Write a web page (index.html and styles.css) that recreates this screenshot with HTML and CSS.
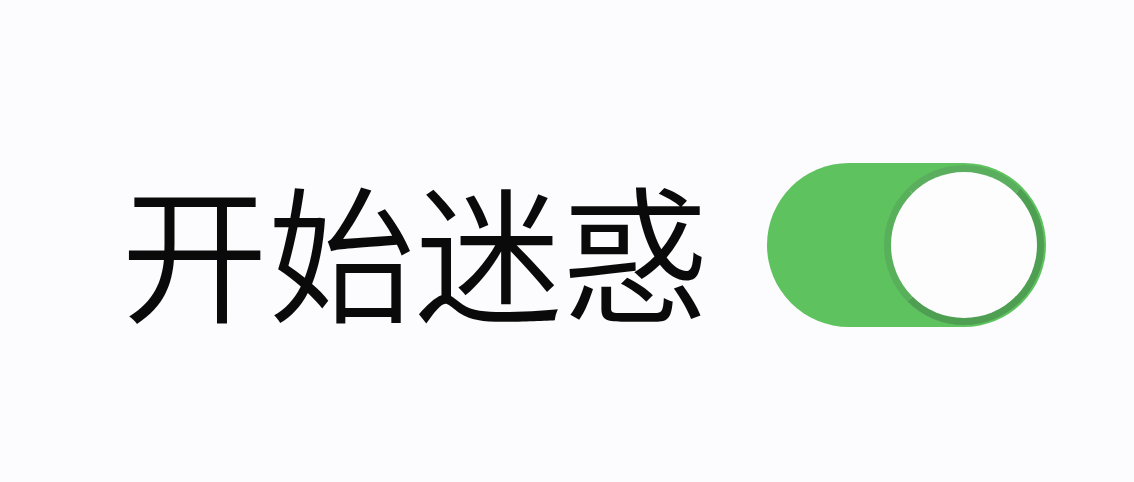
FILE: index.html
```html
<!DOCTYPE html>
<html lang="zh-CN">

<head>
    <meta charset="UTF-8">
    <meta name="viewport" content="width=device-width, initial-scale=1.0">
    <title>开始迷惑</title>
    <link rel="stylesheet" href="styles.css">
</head>

<body>
    <div class="setting-row">
        <span class="setting-label">开始迷惑</span>
        <label class="switch">
            <input type="checkbox" checked>
            <span class="track"><span class="knob"></span></span>
        </label>
    </div>
</body>

</html>
```

FILE: styles.css
```css
body {
    margin: 0;
    padding: 0;
    height: 482px;
    background-color: #fcfbfd;
    font-family: "Noto Sans CJK SC", "Noto Sans", sans-serif;
    overflow: hidden;
}

.setting-row {
    display: flex;
    align-items: center;
    gap: 58px;
    padding: 163px 0 0 121px;
}

.setting-label {
    font-size: 147px;
    font-weight: 350;
    line-height: 1;
    color: #0a0a0a;
    margin-top: 2px;
}

.switch input {
    display: none;
}

.track {
    display: flex;
    justify-content: flex-end;
    align-items: center;
    width: 279px;
    height: 164px;
    padding: 0 2px;
    box-sizing: border-box;
    border-radius: 82px;
    background-color: #5ec25f;
}

/* white thumb with a darker green rim, heavier towards bottom right */
.knob {
    width: 146px;
    height: 146px;
    border-radius: 50%;
    background-color: #fdfdfd;
    border: 7px solid #4f9f53;
    border-top-color: #5aae5d;
    border-left-color: #58b05b;
}
```
